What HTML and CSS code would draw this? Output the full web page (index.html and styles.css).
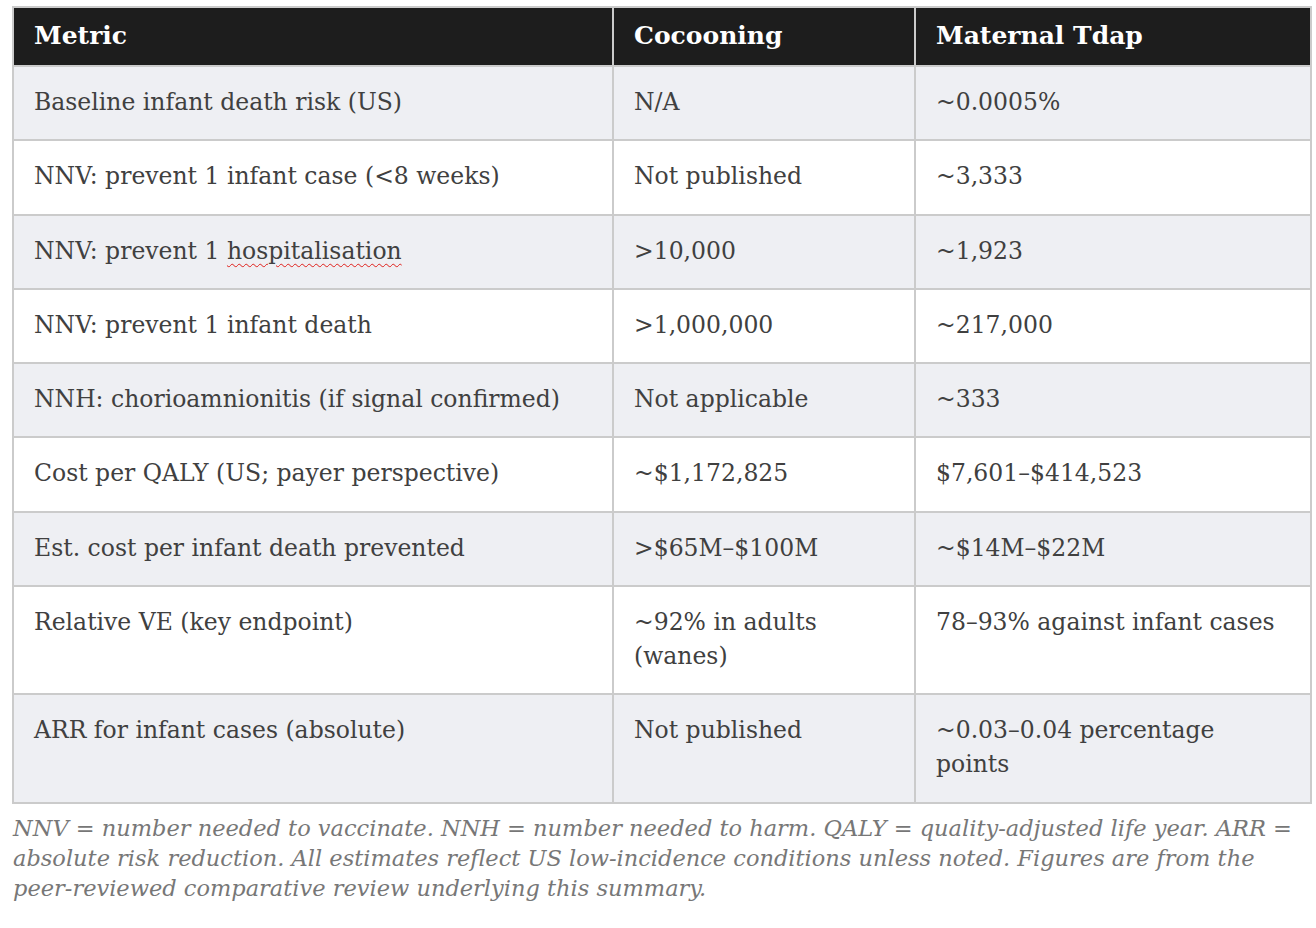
FILE: index.html
```html
<!DOCTYPE html>
<html lang="en">
<head>
<meta charset="utf-8">
<title>Cocooning vs Maternal Tdap</title>
<link rel="stylesheet" href="styles.css">
</head>
<body>
<div class="wrap">
  <table class="cmp">
    <colgroup>
      <col class="c1"><col class="c2"><col class="c3">
    </colgroup>
    <thead>
      <tr><th>Metric</th><th>Cocooning</th><th>Maternal Tdap</th></tr>
    </thead>
    <tbody>
      <tr><td>Baseline infant death risk (US)</td><td>N/A</td><td>~0.0005%</td></tr>
      <tr><td>NNV: prevent 1 infant case (&lt;8 weeks)</td><td>Not published</td><td>~3,333</td></tr>
      <tr><td>NNV: prevent 1 <span class="spell">hospitalisation</span></td><td>&gt;10,000</td><td>~1,923</td></tr>
      <tr><td>NNV: prevent 1 infant death</td><td>&gt;1,000,000</td><td>~217,000</td></tr>
      <tr><td>NNH: chorioamnionitis (if signal confirmed)</td><td>Not applicable</td><td>~333</td></tr>
      <tr><td>Cost per QALY (US; payer perspective)</td><td>~$1,172,825</td><td>$7,601–$414,523</td></tr>
      <tr><td>Est. cost per infant death prevented</td><td>&gt;$65M–$100M</td><td>~$14M–$22M</td></tr>
      <tr><td>Relative VE (key endpoint)</td><td>~92% in adults<br>(wanes)</td><td>78–93% against infant cases</td></tr>
      <tr><td>ARR for infant cases (absolute)</td><td>Not published</td><td>~0.03–0.04 percentage<br>points</td></tr>
    </tbody>
  </table>
  <p class="note">NNV = number needed to vaccinate. NNH = number needed to harm. QALY = quality-adjusted life year. ARR = absolute risk reduction. All estimates reflect US low-incidence conditions unless noted. Figures are from the peer-reviewed comparative review underlying this summary.</p>
</div>
</body>
</html>
```

FILE: styles.css
```css
html, body {
  margin: 0;
  padding: 0;
  background: #ffffff;
}
.wrap {
  padding: 6px 5px 0 12px;
  width: 1299px;
}
.cmp {
  width: 1298px;
  border-collapse: collapse;
  table-layout: fixed;
  font-family: "DejaVu Serif", "Liberation Serif", serif;
  font-size: 23.5px;
  line-height: 34px;
  color: #404040;
  border: 2px solid #cbcbcb;
}
.c1 { width: 600px; }
.c2 { width: 302px; }
.c3 { width: 396px; }
.cmp th {
  background: #1d1d1d;
  color: #ffffff;
  font-size: 25px;
  line-height: 35px;
  font-weight: bold;
  text-align: left;
  padding: 10px 20px 12px;
  border: 2px solid #cbcbcb;
  border-top: none;
}
.cmp td {
  padding: 18px 20px 20.3px;
  vertical-align: top;
  border: 2px solid #cbcbcb;
}
.cmp tbody tr:nth-child(odd) td { background: #eeeff3; }
.cmp tbody tr:nth-child(even) td { background: #ffffff; }
.spell {
  text-decoration: underline wavy #e0201b;
  text-decoration-thickness: 1px;
  text-underline-offset: 4px;
}
.note {
  margin: 9px 0 0 1px;
  font-family: "DejaVu Serif", "Liberation Serif", serif;
  font-style: italic;
  font-size: 22.5px;
  line-height: 30px;
  color: #777777;
}
```
